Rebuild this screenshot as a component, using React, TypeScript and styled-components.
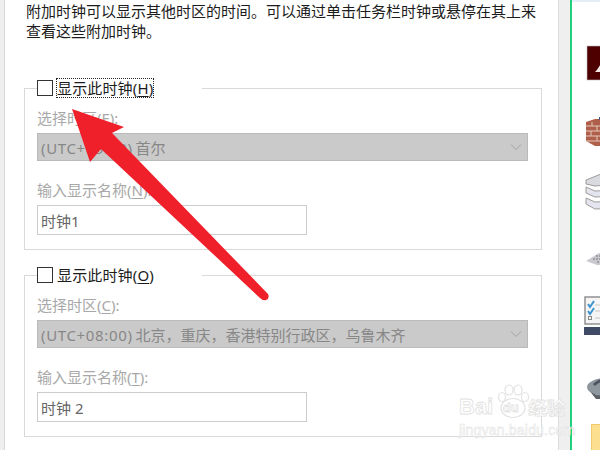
import styled, { createGlobalStyle } from "styled-components";

const GlobalStyle = createGlobalStyle`
  html, body {
    margin: 0;
    padding: 0;
    background: #ffffff;
  }
  body {
    font-family: "Noto Sans", "Noto Sans CJK SC", sans-serif;
  }
`;

const Page = styled.div`
  position: relative;
  display: flex;
  width: 600px;
  height: 450px;
  overflow: hidden;
  background: #ffffff;
`;
const Edge = styled.div`
  flex: none;
  width: 4px;
  background: #efefef;
  border-right: 1px solid #d9d9d9;
`;
const Main = styled.main`
  flex: none;
  width: 553px;
  box-sizing: border-box;
  padding: 0 16px 0 19px;
`;
const Intro = styled.p`
  margin: 0 0 0 2px;
  height: 78px;
  font-size: 15px;
  line-height: 20px;
  padding-top: 1px;
  box-sizing: border-box;
  color: #1c1c1c;
  white-space: nowrap;
`;
const Group = styled.fieldset`
  box-sizing: border-box;
  width: 518px;
  height: 172px;
  margin: 0 0 15px;
  padding: 0 12px;
  border: 1px solid #d9d9d9;
`;
const Legend = styled.legend`
  box-sizing: border-box;
  display: flex;
  align-items: center;
  width: 165px;
  height: 20px;
  margin: 0;
  padding: 0;
  background: #ffffff;
`;
const Check = styled.span`
  flex: none;
  box-sizing: border-box;
  width: 16px;
  height: 16px;
  border: 1px solid #333333;
  background: #ffffff;
`;
const CheckText = styled.span<{ $focused?: boolean }>`
  margin-left: 3px;
  padding: 0 1px;
  height: 20px;
  font-size: 15px;
  line-height: 20px;
  letter-spacing: 0.15px;
  color: #1c1c1c;
  white-space: nowrap;
  outline: ${(p) => (p.$focused ? "1px dotted #222222" : "none")};
  outline-offset: -1px;
  u {
    text-underline-offset: 2px;
  }
`;
const FieldLabel = styled.div<{ $top: number }>`
  margin-top: ${(p) => p.$top}px;
  height: 20px;
  font-size: 15px;
  line-height: 20px;
  color: #a8a8a8;
  white-space: nowrap;
  u {
    text-underline-offset: 2px;
  }
`;
const Select = styled.div`
  box-sizing: border-box;
  display: flex;
  align-items: center;
  justify-content: space-between;
  width: 491px;
  height: 28px;
  margin-top: 5px;
  padding: 0 5px 0 3px;
  background: #cacaca;
  border: 1px solid #bababa;
  font-size: 15px;
  color: #878787;
  white-space: nowrap;
`;
const ZoneOffset = styled.span`
  letter-spacing: 0.65px;
  margin-right: 3px;
`;
const Input = styled.div`
  box-sizing: border-box;
  display: flex;
  align-items: center;
  width: 270px;
  height: 30px;
  margin-top: 5px;
  padding: 0 3px;
  background: #ffffff;
  border: 1px solid #cccccc;
  font-size: 15px;
  color: #666666;
  white-space: nowrap;
`;
const Gutter = styled.div`
  flex: none;
  box-sizing: border-box;
  width: 14px;
  background: #efefef;
  border-left: 1px solid #dcdcdc;
  border-right: 2px solid #1fd17a;
`;
const Side = styled.aside`
  flex: 1;
  min-width: 0;
  overflow: hidden;
  border-top: 2px solid #e3eef7;
  display: flex;
  flex-direction: column;
  padding-left: 14px;
`;
const SideIcon = styled.svg<{ $top: number; $left?: number }>`
  flex: none;
  display: block;
  margin-top: ${(p) => p.$top}px;
  margin-left: ${(p) => p.$left ?? 0}px;
`;
const ArrowOverlay = styled.svg`
  position: absolute;
  inset: 0;
  pointer-events: none;
`;
const Watermark = styled.div`
  position: absolute;
  left: 459px;
  top: 384px;
  width: 110px;
  height: 56px;
  color: #ffffff;
  -webkit-text-stroke: 0.8px #e2e2e2;
  font-family: "Liberation Sans", "Noto Sans CJK SC", sans-serif;
  pointer-events: none;
`;
const MarkTop = styled.div`
  position: relative;
  display: flex;
  align-items: center;
  height: 34px;
  margin-top: 6px;
  font-size: 22px;
  font-weight: 700;
  white-space: nowrap;
`;
const MarkDu = styled.span`
  flex: none;
  width: 35px;
  text-align: center;
  font-size: 13px;
`;
const MarkCn = styled.span`
  font-size: 18.500px;
`;
const MarkUrl = styled.div`
  font-size: 14px;
  line-height: 14px;
  margin-top: -1px;
  letter-spacing: 0.2px;
  white-space: nowrap;
  -webkit-text-stroke: 0.5px #e0e0e0;
`;
const Paw = styled.svg`
  position: absolute;
  left: 36px;
  top: 0;
`;

type ClockProps = {
  hotkey: string;
  focused?: boolean;
  zoneKey: string;
  offset: string;
  zone: string;
  nameKey: string;
  name: string;
};

function ClockGroup({ hotkey, focused, zoneKey, offset, zone, nameKey, name }: ClockProps) {
  return (
    <Group>
      <Legend>
        <Check />
        <CheckText $focused={focused}>
          显示此时钟(<u>{hotkey}</u>)
        </CheckText>
      </Legend>
      <FieldLabel $top={10}>
        选择时区(<u>{zoneKey}</u>):
      </FieldLabel>
      <Select>
        <span>
          <ZoneOffset>{offset}</ZoneOffset>
          {zone}
        </span>
        <svg width="12" height="8" viewBox="0 0 12 8">
          <path d="M1 1.5 6 6.5 11 1.5" fill="none" stroke="#a5a5a5" strokeWidth="1" />
        </svg>
      </Select>
      <FieldLabel $top={19}>
        输入显示名称(<u>{nameKey}</u>):
      </FieldLabel>
      <Input>{name}</Input>
    </Group>
  );
}

export default function App() {
  return (
    <>
      <GlobalStyle />
      <Page>
        <Edge />
        <Main>
          <Intro>
            附加时钟可以显示其他时区的时间。可以通过单击任务栏时钟或悬停在其上来
            <br />
            查看这些附加时钟。
          </Intro>
          <ClockGroup hotkey="H" focused zoneKey="E" offset="(UTC+09:00)" zone="首尔" nameKey="N" name="时钟1" />
          <ClockGroup
            hotkey="O"
            zoneKey="C"
            offset="(UTC+08:00)"
            zone="北京，重庆，香港特别行政区，乌鲁木齐"
            nameKey="T"
            name="时钟 2"
          />
        </Main>
        <Gutter />
        <Side>
          <SideIcon $top={43} width="34" height="36" viewBox="0 0 34 36">
            <rect x="1" y="1" width="33" height="34" fill="#4e0000" stroke="#bbbbbb" strokeWidth="0.6" />
            <path d="M9 27 C12 24 13 21 15 19 L15 27 Z" fill="#f4e9e4" />
          </SideIcon>
          <SideIcon $top={36} $left={-1} width="34" height="30" viewBox="0 0 34 30">
            <path d="M1 5 L10 2 L34 2 L34 29 L10 29 L1 24 Z" fill="#b0604a" />
            <path d="M1 9 H34 M1 14 H34 M1 19 H34 M1 24 H34 M7 5 V9 M12 9 V14 M6 14 V19 M12 19 V24" stroke="#e3c8bc" strokeWidth="1" fill="none" />
            <rect x="14" y="0" width="4" height="3" fill="#44558c" />
          </SideIcon>
          <SideIcon $top={25} $left={-1} width="34" height="38" viewBox="0 0 34 38">
            <path d="M1 8 L16 2 L34 2 L34 12 L10 14 L1 12 Z" fill="#d9d9e0" stroke="#9c9c9c" />
            <path d="M1 15 L10 19 L34 18 L34 24 L10 25 L1 21 Z" fill="#e4e4ee" stroke="#9c9c9c" />
            <path d="M1 26 L10 30 L34 29 L34 36 L10 37 L1 32 Z" fill="#e4e4ee" stroke="#9c9c9c" />
          </SideIcon>
          <SideIcon $top={42} $left={-1} width="34" height="14" viewBox="0 0 34 14">
            <path d="M1 9 L14 1 L34 1 L34 13 L12 13 Z" fill="#c9c9cf" />
            <path d="M8 7 H34 M11 4 H34 M12 10 H34" stroke="#77777f" strokeDasharray="2 1" fill="none" />
          </SideIcon>
          <SideIcon $top={30} $left={-2} width="34" height="40" viewBox="0 0 34 40">
            <rect x="1" y="1" width="33" height="27" fill="#f5f5f5" stroke="#8a8a8a" strokeWidth="1.400" />
            <path d="M4 8 L6 11 L10 5 M4 15 L6 18 L10 12" fill="none" stroke="#3b94cf" strokeWidth="2" />
            <rect x="4.500" y="20.500" width="3" height="3" fill="none" stroke="#8a8a8a" />
            <path d="M11 9 H34 M11 15 H34 M11 22 H34" stroke="#c8c8c8" />
            <rect x="0" y="31" width="34" height="8" fill="#3f4a66" />
          </SideIcon>
          <SideIcon $top={39} width="34" height="24" viewBox="0 0 34 24">
            <ellipse cx="20" cy="12" rx="19" ry="9" fill="#8e969e" />
            <path d="M2 14 C6 21 20 22 34 20 V24 H10 Z" fill="#5b6168" />
            <path d="M8 10 C14 4 26 2 34 2" stroke="#4e5560" strokeWidth="3" fill="none" />
          </SideIcon>
          <SideIcon $top={25} $left={5} width="34" height="30" viewBox="0 0 34 30">
            <rect x="0.500" y="0.500" width="33" height="29" fill="#fde08f" stroke="#f0cb6a" />
          </SideIcon>
        </Side>
        <ArrowOverlay width="600" height="450" viewBox="0 0 600 450">
          <path
            d="M72 109 L124 127 L112 133 L268 294 Q270 298 266 300 Q263 301 260 298 L101 149 L90 162 Z"
            fill="#f0202b"
          />
        </ArrowOverlay>
        <Watermark>
          <Paw width="36" height="36" viewBox="0 0 36 36">
            <g fill="#ffffff" stroke="#e2e2e2" strokeWidth="1.200">
              <ellipse cx="7" cy="13" rx="3.500" ry="4.500" />
              <ellipse cx="14" cy="6" rx="4" ry="5" />
              <ellipse cx="23" cy="6" rx="4" ry="5" />
              <ellipse cx="30" cy="13" rx="3.500" ry="4.500" />
              <ellipse cx="18" cy="24" rx="12" ry="9.500" />
            </g>
          </Paw>
          <MarkTop>
            Bai
            <MarkDu>du</MarkDu>
            <MarkCn>经验</MarkCn>
          </MarkTop>
          <MarkUrl>jingyan.baidu.com</MarkUrl>
        </Watermark>
      </Page>
    </>
  );
}
